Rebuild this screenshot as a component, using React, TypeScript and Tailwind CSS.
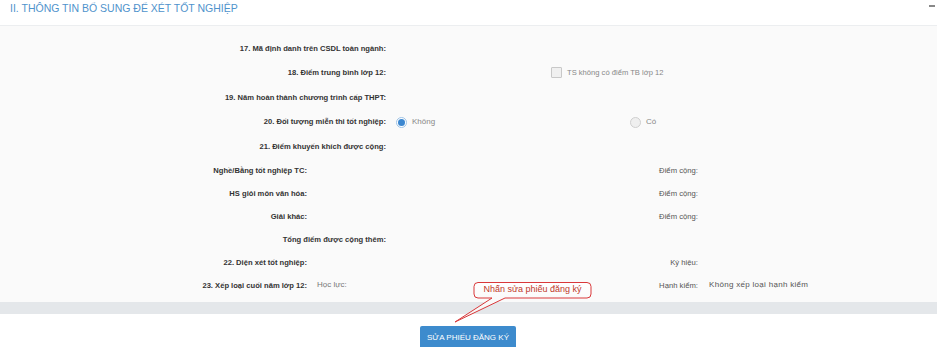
import React from "react";

const font = { fontFamily: '"Liberation Sans", Arial, sans-serif' };

function MainRow({ label, children }: { label: string; children?: React.ReactNode }) {
  return (
    <div className="flex h-[24.6px] items-center">
      <div className="w-[386px] shrink-0 text-right text-[7.6px] font-bold text-[#333]">{label}</div>
      <div className="flex flex-1 items-center">{children}</div>
    </div>
  );
}

function SubRow({
  label,
  value,
  label2,
  value2,
  wide,
}: {
  label: string;
  value?: string;
  label2?: string;
  value2?: string;
  wide?: boolean;
}) {
  return (
    <div className="flex h-[23px] items-center">
      <div
        className={
          wide
            ? "w-[386px] shrink-0 text-right text-[7.6px] font-bold text-[#333]"
            : "w-[307px] shrink-0 text-right text-[7.6px] font-bold text-[#333]"
        }
      >
        {label}
      </div>
      {!wide && (
        <>
          <div className="w-[350px] shrink-0 pl-[10px] text-[8px] text-[#777]">{value}</div>
          <div className="w-[41px] shrink-0 text-right text-[7.7px] text-[#555]">{label2}</div>
          <div className="pl-[11px] text-[8px] tracking-[0.3px] text-[#555]">{value2}</div>
        </>
      )}
    </div>
  );
}

export default function App() {
  return (
    <div className="relative w-[937px] h-[347px] overflow-hidden bg-white" style={font}>
      {/* header */}
      <div className="flex h-[26px] items-start justify-between border-b border-[#eceef0] bg-white px-[10px] pt-[1px]">
        <h2 className="text-[10.5px] uppercase text-[#4f93cc]">II. Thông tin bổ sung để xét tốt nghiệp</h2>
        <div className="mr-[-8px] mt-[4px] h-[2px] w-[6px] bg-[#888]" />
      </div>

      {/* body */}
      <div className="bg-[#fafafa] pt-[10px] pb-[5px]">
        <MainRow label="17. Mã định danh trên CSDL toàn ngành:" />
        <MainRow label="18. Điểm trung bình lớp 12:">
          <div className="ml-[165px] flex items-center gap-[5px]">
            <span className="h-[11px] w-[11px] rounded-[1px] border border-[#c8c8c8] bg-[#f0f0f0]" />
            <span className="text-[7.6px] text-[#888]">TS không có điểm TB lớp 12</span>
          </div>
        </MainRow>
        <MainRow label="19. Năm hoàn thành chương trình cấp THPT:" />
        <MainRow label="20. Đối tượng miễn thi tốt nghiệp:">
          <div className="ml-[10px] flex w-[234px] items-center gap-[5px]">
            <span className="flex h-[11px] w-[11px] items-center justify-center rounded-full border border-[#9ec3e6] bg-white">
              <span className="h-[7px] w-[7px] rounded-full bg-[#3c87d0]" />
            </span>
            <span className="text-[8px] text-[#888]">Không</span>
          </div>
          <div className="flex items-center gap-[5px]">
            <span className="h-[11px] w-[11px] rounded-full border border-[#cfcfcf] bg-[#efefef]" />
            <span className="text-[8px] text-[#888]">Có</span>
          </div>
        </MainRow>
        <MainRow label="21. Điểm khuyến khích được cộng:" />
        <SubRow label="Nghề/Bằng tốt nghiệp TC:" label2="Điểm cộng:" />
        <SubRow label="HS giỏi môn văn hóa:" label2="Điểm cộng:" />
        <SubRow label="Giải khác:" label2="Điểm cộng:" />
        <SubRow label="Tổng điểm được cộng thêm:" wide />
        <SubRow label="22. Diện xét tốt nghiệp:" label2="Ký hiệu:" />
        <SubRow
          label="23. Xếp loại cuối năm lớp 12:"
          value="Học lực:"
          label2="Hạnh kiểm:"
          value2="Không xếp loại hạnh kiểm"
        />
      </div>

      {/* gray strip */}
      <div className="h-[12px] bg-[#e4e7ea]" />

      {/* footer */}
      <div className="flex justify-center pt-[12px]">
        <button className="ml-[-1px] h-[24px] w-[96px] rounded-[2px] bg-[#3d8bcd] text-[8px] text-white">
          SỬA PHIẾU ĐĂNG KÝ
        </button>
      </div>

      {/* callout */}
      <svg className="absolute left-0 top-0" width="937" height="347" viewBox="0 0 937 347">
        <defs>
          <linearGradient id="cg" x1="0" y1="0" x2="0" y2="1">
            <stop offset="0" stopColor="#ffffff" />
            <stop offset="1" stopColor="#f3f3f3" />
          </linearGradient>
        </defs>
        <path
          d="M478 282.5 H587 Q591 282.5 591 286.5 V294 Q591 298 587 298 H505 L455 322 L492 298 H478 Q474 298 474 294 V286.5 Q474 282.5 478 282.5 Z"
          fill="url(#cg)"
          stroke="#d9383a"
          strokeWidth="1"
        />
      </svg>
      <div className="absolute left-[474px] top-[282px] flex h-[16px] w-[117px] items-center justify-center text-[9px] text-[#c0392b]">
        Nhấn sửa phiếu đăng ký
      </div>
    </div>
  );
}
